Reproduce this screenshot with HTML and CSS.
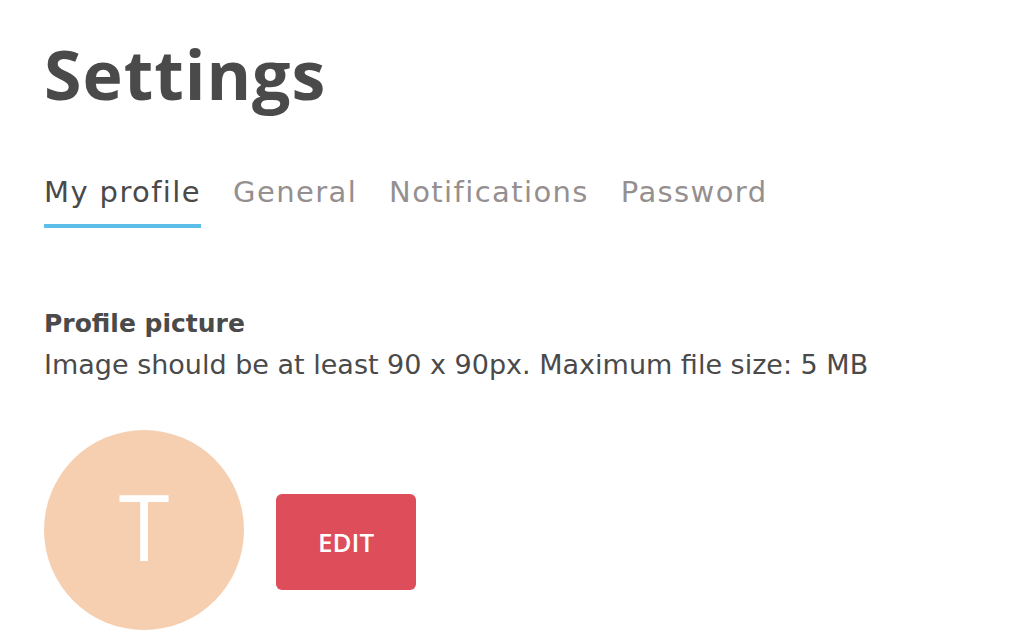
FILE: index.html
```html
<!DOCTYPE html>
<html lang="en">
<head>
    <meta charset="UTF-8">
    <meta name="viewport" content="width=device-width, initial-scale=1.0">
    <title>Settings</title>
    <link rel="stylesheet" href="styles.css">
</head>
<body>

<div class="page">
    <h1>Settings</h1>

    <nav class="tabs">
        <a class="tab active" href="#">My profile</a>
        <a class="tab" href="#">General</a>
        <a class="tab" href="#">Notifications</a>
        <a class="tab" href="#">Password</a>
    </nav>

    <section class="profile">
        <h2>Profile picture</h2>
        <p class="hint">Image should be at least 90 x 90px. Maximum file size: 5 MB</p>

        <div class="avatar-row">
            <div class="avatar">T</div>
            <button class="btn-edit">EDIT</button>
        </div>
    </section>
</div>

</body>
</html>
```

FILE: styles.css
```css
/* Basic styling for the page */
body {
    font-family: "DejaVu Sans", Verdana, sans-serif;
    background-color: #fff;
    color: #4a4a4a;
    margin: 0;
}
.page {
    padding: 0 44px;
}
h1 {
    font-family: "Open Sans", Arial, sans-serif;
    font-size: 68px;
    font-weight: 700;
    letter-spacing: 1px;
    line-height: 1;
    margin: 0;
    padding-top: 40px;
    color: #4a4a4a;
}
.tabs {
    display: flex;
    gap: 32px;
    margin-top: 70px;
}
.tab {
    font-size: 29px;
    letter-spacing: 1.4px;
    line-height: 1;
    color: #958f8f;
    text-decoration: none;
    padding-bottom: 17px;
    border-bottom: 4px solid transparent;
}
.tab.active {
    color: #4a4a4a;
    border-bottom-color: #5bbfe9;
}
.profile {
    margin-top: 76px;
}
h2 {
    font-size: 25px;
    font-weight: 700;
    line-height: 40px;
    margin: 0;
}
.hint {
    font-size: 27px;
    line-height: 42px;
    margin: 0;
}
.avatar-row {
    display: flex;
    align-items: flex-start;
    gap: 32px;
    margin-top: 44px;
}
.avatar {
    width: 200px;
    height: 200px;
    border-radius: 50%;
    background-color: #f6cfb0;
    color: #fff;
    font-family: "Open Sans", Arial, sans-serif;
    font-size: 92px;
    font-weight: 400;
    line-height: 1;
    display: flex;
    align-items: center;
    justify-content: center;
    padding-bottom: 8px;
    box-sizing: border-box;
}
.btn-edit {
    width: 140px;
    height: 96px;
    margin-top: 64px;
    border: none;
    border-radius: 6px;
    background-color: #de4d5a;
    color: #fff;
    font-family: "Open Sans", Arial, sans-serif;
    font-size: 26px;
    font-weight: 600;
}
```
